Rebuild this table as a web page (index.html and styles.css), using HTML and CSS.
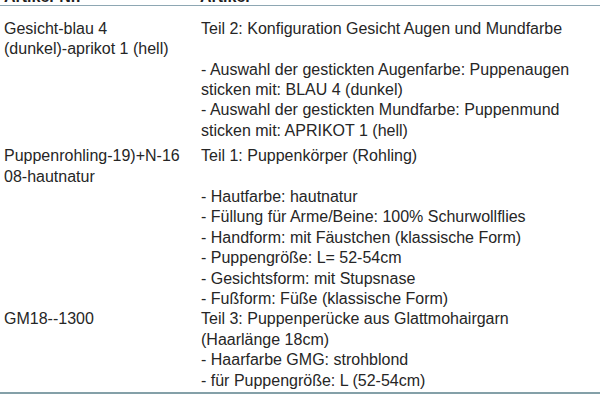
FILE: index.html
```html
<!DOCTYPE html>
<html lang="de">
<head>
<meta charset="utf-8">
<title>Artikel</title>
<link rel="stylesheet" href="styles.css">
</head>
<body>
<div class="sheet">
  <div class="row head">
    <div class="cell c1"><span class="hl">Artikel-Nr.</span></div>
    <div class="cell c2"><span class="hl">Artikel</span></div>
  </div>
  <div class="row r1">
    <div class="cell c1">Gesicht-blau 4<br>(dunkel)-aprikot 1 (hell)</div>
    <div class="cell c2">Teil 2: Konfiguration Gesicht Augen und Mundfarbe<br><br>- Auswahl der gestickten Augenfarbe: Puppenaugen<br>sticken mit: BLAU 4 (dunkel)<br>- Auswahl der gestickten Mundfarbe: Puppenmund<br>sticken mit: APRIKOT 1 (hell)</div>
  </div>
  <div class="row r2">
    <div class="cell c1">Puppenrohling-19)+N-16<br>08-hautnatur</div>
    <div class="cell c2">Teil 1: Puppenkörper (Rohling)<br><br>- Hautfarbe: hautnatur<br>- Füllung für Arme/Beine: 100% Schurwollflies<br>- Handform: mit Fäustchen (klassische Form)<br>- Puppengröße: L= 52-54cm<br>- Gesichtsform: mit Stupsnase<br>- Fußform: Füße (klassische Form)</div>
  </div>
  <div class="row r3">
    <div class="cell c1">GM18--1300</div>
    <div class="cell c2">Teil 3: Puppenperücke aus Glattmohairgarn<br>(Haarlänge 18cm)<br>- Haarfarbe GMG: strohblond<br>- für Puppengröße: L (52-54cm)</div>
  </div>
</div>
</body>
</html>
```
FILE: styles.css
```css
html, body {
  margin: 0;
  padding: 0;
  background: #ffffff;
}
body {
  font-family: "Liberation Sans", Arial, sans-serif;
  font-size: 16px;
  color: #262626;
}
.sheet {
  width: 600px;
  display: flex;
  flex-direction: column;
}
.row {
  display: grid;
  grid-template-columns: 197px 1fr;
  padding-left: 4px;
}
.cell {
  line-height: 20.4px;
  white-space: nowrap;
}
.head {
  height: 5px;
  overflow: hidden;
  align-items: end;
  border-bottom: 1px solid #8ea7b3;
}
.head .cell {
  line-height: 16px;
  font-weight: bold;
  color: #1e1e1e;
  display: flex;
  align-items: flex-end;
  height: 5px;
}
.head .c2 {
  margin-left: -1px;
}
.r1 {
  padding-top: 12.8px;
  padding-bottom: 5px;
}
.r3 {
  border-bottom: 2px solid #84a0a8;
  padding-bottom: 0.8px;
}
```
